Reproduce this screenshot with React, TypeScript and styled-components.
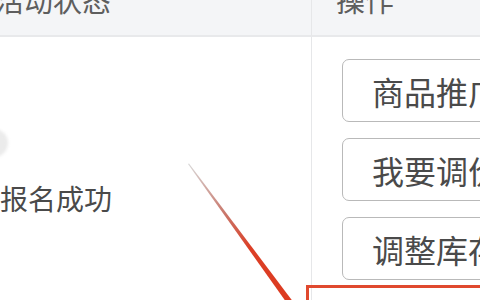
import styled, { createGlobalStyle } from 'styled-components'

const GlobalStyle = createGlobalStyle`
  html, body {
    margin: 0;
    padding: 0;
    background: #fff;
  }
  body {
    font-family: "Noto Sans CJK SC", "Noto Sans", sans-serif;
  }
`

const Page = styled.div`
  position: relative;
  width: 480px;
  height: 300px;
  overflow: hidden;
  background: #fff;
`

const Table = styled.div`
  display: grid;
  grid-template-columns: 312px 1fr;
  grid-template-rows: 37px 1fr;
  height: 100%;
`

const HeadCell = styled.div<{ $first?: boolean }>`
  background: #f4f5f7;
  border-bottom: 2px solid #e8e9eb;
  border-right: ${(p) => (p.$first ? '1px solid #e6e7e9' : 'none')};
  padding-left: ${(p) => (p.$first ? '0' : '29px')};
  overflow: hidden;
`

const HeadText = styled.div`
  font-size: 29px;
  line-height: 29px;
  color: #5e5e5e;
  margin-top: -15px;
  margin-left: -5px;
`

const StatusCell = styled.div`
  border-right: 1px solid #e6e7e9;
  padding-top: 92px;
`

const Dot = styled.div`
  width: 28px;
  height: 28px;
  margin-left: -20px;
  border-radius: 50%;
  background: #ebebeb;
  filter: blur(1.5px);
`

const StatusText = styled.div`
  margin-top: 24px;
  font-size: 28px;
  line-height: 34px;
  color: #4a4a4a;
`

const ActionCell = styled.div`
  display: flex;
  flex-direction: column;
  gap: 16px;
  padding: 22px 0 0 30px;
`

const ActionButton = styled.div`
  box-sizing: border-box;
  width: 200px;
  height: 63px;
  flex-shrink: 0;
  display: flex;
  align-items: center;
  padding-left: 29px;
  border: 1.5px solid #b9b9b9;
  border-radius: 7px;
  font-size: 32px;
  color: #4a4a4a;
  white-space: nowrap;
  background: #fff;
`

const Highlight = styled.div`
  position: absolute;
  left: 306px;
  top: 285px;
  width: 220px;
  height: 60px;
  border: 3px solid #e0492f;
`

const Arrow = styled.svg`
  position: absolute;
  left: 0;
  top: 0;
  pointer-events: none;
`

export default function App() {
  return (
    <Page>
      <GlobalStyle />
      <Table>
        <HeadCell $first>
          <HeadText>活动状态</HeadText>
        </HeadCell>
        <HeadCell>
          <HeadText>操作</HeadText>
        </HeadCell>
        <StatusCell>
          <Dot />
          <StatusText>报名成功</StatusText>
        </StatusCell>
        <ActionCell>
          <ActionButton>商品推广</ActionButton>
          <ActionButton>我要调价</ActionButton>
          <ActionButton>调整库存</ActionButton>
        </ActionCell>
      </Table>
      <Highlight />
      <Arrow width="480" height="300" viewBox="0 0 480 300">
        <defs>
          <linearGradient id="arrowGrad" x1="188" y1="164" x2="292" y2="304" gradientUnits="userSpaceOnUse">
            <stop offset="0" stopColor="#d8d8d8" />
            <stop offset="0.35" stopColor="#c9786c" />
            <stop offset="0.6" stopColor="#dc3f26" />
            <stop offset="1" stopColor="#dc3a20" />
          </linearGradient>
        </defs>
        <polygon points="188,164 189,163.6 294,303 289,306" fill="url(#arrowGrad)" />
      </Arrow>
    </Page>
  )
}
